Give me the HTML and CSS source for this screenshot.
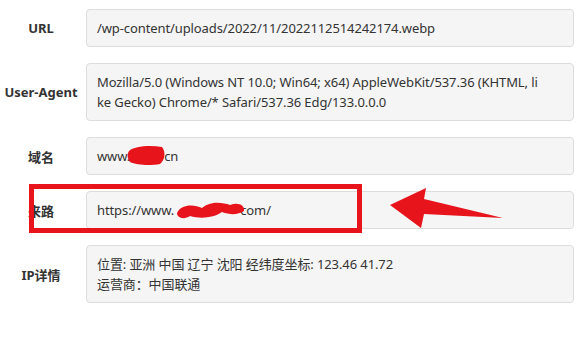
FILE: index.html
```html
<!doctype html>
<html lang="zh-CN">
<head>
  <meta charset="UTF-8">
  <title>访问详情</title>
  <link rel="stylesheet" href="styles.css">
</head>
<body>
  <div class="detail-list">
    <div class="detail-row">
      <div class="detail-label">URL</div>
      <div class="detail-value">/wp-content/uploads/2022/11/2022112514242174.webp</div>
    </div>
    <div class="detail-row">
      <div class="detail-label">User-Agent</div>
      <div class="detail-value">Mozilla/5.0 (Windows NT 10.0; Win64; x64) AppleWebKit/537.36 (KHTML, li<br>ke Gecko) Chrome/* Safari/537.36 Edg/133.0.0.0</div>
    </div>
    <div class="detail-row">
      <div class="detail-label">域名</div>
      <div class="detail-value">www.<span class="hidden-part domain-part"></span>cn</div>
    </div>
    <div class="detail-row">
      <div class="detail-label">来路</div>
      <div class="detail-value">https://www.<span class="hidden-part referer-part"></span>com/</div>
    </div>
    <div class="detail-row">
      <div class="detail-label">IP详情</div>
      <div class="detail-value">位置: 亚洲 中国 辽宁 沈阳 经纬度坐标: 123.46 41.72<br>运营商：中国联通</div>
    </div>
  </div>

  <!-- annotations drawn over the screenshot -->
  <div class="mark-box"></div>
  <svg class="mark-svg" width="577" height="351" viewBox="0 0 577 351">
    <path d="M129 151 C134 146 150 145 162 147 C166 152 165 160 160 164 C150 166 136 165 130 162 C127 158 127 154 129 151 Z" fill="#e8141c"/>
    <path d="M177 213 C181 204 194 204 202 208 C210 201 222 202 230 205 C238 202 245 205 244 211 C238 215 230 215 222 212 C214 218 200 219 190 216 C184 220 177 218 177 213 Z" fill="#e8141c"/>
    <polygon points="390,205 426,188 424,199 503,218 424,214 421,228" fill="#e8141c"/>
  </svg>
</body>
</html>
```
FILE: styles.css
```css
body {
  margin: 0;
  padding: 9px 3px 0 0;
  background: #ffffff;
  font-family: "Noto Sans", "Noto Sans CJK SC", sans-serif;
  font-size: 13px;
  color: #333333;
  position: relative;
  height: 342px;
  overflow: hidden;
}

.detail-list {
  display: flex;
  flex-direction: column;
  gap: 16px;
}

.detail-row {
  display: flex;
  align-items: center;
}

.detail-label {
  width: 82px;
  margin-right: 4px;
  text-align: center;
  font-weight: bold;
  font-size: 13px;
}

.detail-value {
  flex: 1;
  padding: 8px 10px;
  line-height: 20px;
  background: #f5f5f5;
  border: 1px solid #dddddd;
  border-radius: 4px;
  white-space: nowrap;
  overflow: hidden;
  letter-spacing: -0.1px;
}

.hidden-part {
  display: inline-block;
  height: 1px;
}

.domain-part {
  width: 34px;
}

.referer-part {
  width: 66px;
}

.mark-box {
  position: absolute;
  left: 29px;
  top: 184px;
  width: 323px;
  height: 39px;
  border: 5px solid #e8141c;
}

.mark-svg {
  position: absolute;
  left: 0;
  top: 0;
}
```
